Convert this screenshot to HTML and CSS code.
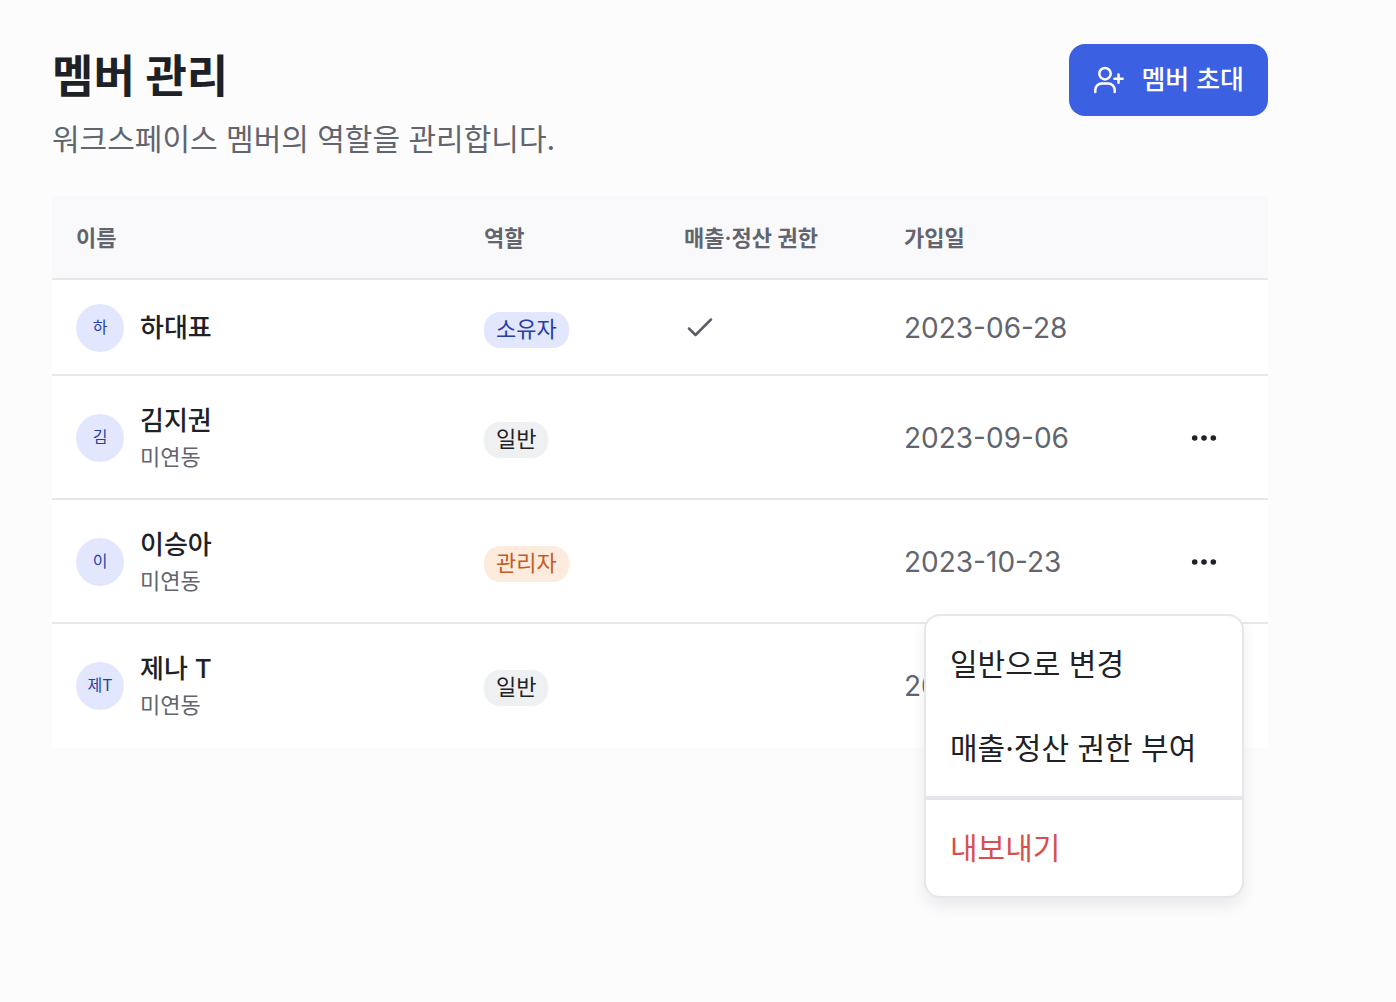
FILE: index.html
```html
<!DOCTYPE html>
<html lang="ko">
<head>
    <meta charset="UTF-8">
    <meta name="viewport" content="width=device-width, initial-scale=1.0">
    <title>멤버 관리</title>
    <link rel="stylesheet" href="styles.css">
</head>
<body>
    <main class="page">
        <header class="page-header">
            <div>
                <h1>멤버 관리</h1>
                <p class="subtitle">워크스페이스 멤버의 역할을 관리합니다.</p>
            </div>
            <button type="button" class="invite">
                <svg class="icon" viewBox="0 0 32 32" aria-hidden="true">
                    <circle cx="12" cy="9.7" r="5.7"/>
                    <path d="M2.3 28v-2a6.4 6.4 0 0 1 6.4-6.4h6.6a6.4 6.4 0 0 1 6.4 6.4v2M25.5 10.6v8.2M21.4 14.7h8.2"/>
                </svg>
                멤버 초대
            </button>
        </header>

        <table class="members">
            <thead>
                <tr>
                    <th>이름</th>
                    <th class="col-role">역할</th>
                    <th class="col-perm">매출·정산 권한</th>
                    <th class="col-date">가입일</th>
                    <th class="col-action"></th>
                </tr>
            </thead>
            <tbody>
                <tr>
                    <td>
                        <div class="member">
                            <span class="avatar">하</span>
                            <div class="name">하대표</div>
                        </div>
                    </td>
                    <td><span class="badge owner">소유자</span></td>
                    <td>
                        <svg class="icon check" viewBox="0 0 32 32" role="img" aria-label="권한 있음">
                            <path d="M5 16.5l6.5 6.5L27 7.5"/>
                        </svg>
                    </td>
                    <td class="date">2023-06-28</td>
                    <td></td>
                </tr>
                <tr>
                    <td>
                        <div class="member">
                            <span class="avatar">김</span>
                            <div class="with-team">
                                <div class="name">김지권</div>
                                <div class="team">미연동</div>
                            </div>
                        </div>
                    </td>
                    <td><span class="badge">일반</span></td>
                    <td></td>
                    <td class="date">2023-09-06</td>
                    <td>
                        <button type="button" class="more" aria-label="더보기">
                            <svg class="dots" viewBox="0 0 32 32" aria-hidden="true">
                                <circle cx="6.7" cy="16" r="2.8"/><circle cx="16" cy="16" r="2.8"/><circle cx="25.3" cy="16" r="2.8"/>
                            </svg>
                        </button>
                    </td>
                </tr>
                <tr>
                    <td>
                        <div class="member">
                            <span class="avatar">이</span>
                            <div class="with-team">
                                <div class="name">이승아</div>
                                <div class="team">미연동</div>
                            </div>
                        </div>
                    </td>
                    <td><span class="badge admin">관리자</span></td>
                    <td></td>
                    <td class="date">2023-10-23</td>
                    <td>
                        <div class="dropdown">
                            <button type="button" class="more" aria-label="더보기" aria-expanded="true">
                                <svg class="dots" viewBox="0 0 32 32" aria-hidden="true">
                                    <circle cx="6.7" cy="16" r="2.8"/><circle cx="16" cy="16" r="2.8"/><circle cx="25.3" cy="16" r="2.8"/>
                                </svg>
                            </button>
                            <div class="menu">
                                <div class="menu-group">
                                    <button type="button">일반으로 변경</button>
                                    <button type="button">매출·정산 권한 부여</button>
                                </div>
                                <div class="menu-group">
                                    <button type="button" class="danger">내보내기</button>
                                </div>
                            </div>
                        </div>
                    </td>
                </tr>
                <tr>
                    <td>
                        <div class="member">
                            <span class="avatar">제T</span>
                            <div class="with-team">
                                <div class="name">제나 T</div>
                                <div class="team">미연동</div>
                            </div>
                        </div>
                    </td>
                    <td><span class="badge">일반</span></td>
                    <td></td>
                    <td class="date">2023-11-02</td>
                    <td></td>
                </tr>
            </tbody>
        </table>
    </main>
</body>
</html>
```
FILE: styles.css
```css
*{box-sizing: border-box;}
body{
    margin: 0;
    background-color: #fcfcfc;
    color: #1e2125;
    font: 26px/40px Inter, "Noto Sans CJK KR", sans-serif;
}
h1, p{margin: 0;}
button{
    border: 0;
    background: none;
    color: inherit;
    font: inherit;
    cursor: pointer;
}

.page{
    min-height: 100vh;
    padding: 44px 128px 44px 52px;
}
.page-header{
    display: flex;
    justify-content: space-between;
    align-items: flex-start;
    margin-bottom: 34px;
}
h1{
    margin-bottom: 6px;
    font-size: 45px;
    line-height: 66px;
    font-weight: 700;
}
.subtitle{
    color: #62656e;
    font-size: 30px;
    line-height: 46px;
}
.invite{
    display: flex;
    align-items: center;
    gap: 16px;
    height: 72px;
    padding: 0 24px;
    border-radius: 16px;
    background-color: #3b60e2;
    color: #ffffff;
    font-weight: 500;
}
.icon{
    display: block;
    width: 32px;
    height: 32px;
    fill: none;
    stroke: currentColor;
    stroke-width: 2.5;
    stroke-linecap: round;
    stroke-linejoin: round;
}

/* table */
.members{
    width: 100%;
    table-layout: fixed;
    border-collapse: separate;
    border-spacing: 0;
    background-color: #ffffff;
}
.members th{
    height: 84px;
    padding: 2px 24px 0;
    border-bottom: 2px solid #e6e7eb;
    background-color: #f9f9fb;
    color: #62656e;
    font-size: 22px;
    font-weight: 600;
    text-align: left;
    white-space: nowrap;
}
.members td{
    padding: 24px 24px 22px;
    border-bottom: 2px solid #e6e7eb;
    vertical-align: middle;
}
.members tbody tr:last-child td{
    padding-bottom: 24px;
    border-bottom: 0;
}
.members .col-role{width: 200px;}
.members .col-perm{width: 220px;}
.members .col-date{width: 260px;}
.members .col-action{width: 128px;}

.member{
    display: flex;
    align-items: center;
    gap: 16px;
}
.avatar{
    flex: none;
    width: 48px;
    height: 48px;
    border-radius: 50%;
    background-color: #e2e7fe;
    color: #263ea6;
    font-size: 16px;
    line-height: 46px;
    text-align: center;
}
.with-team{padding: 2px 0;}
.name{
    font-weight: 500;
    line-height: 38px;
}
.team{
    color: #62656e;
    font-size: 22px;
    line-height: 34px;
}
.badge{
    display: inline-block;
    height: 36px;
    padding: 0 12px;
    border-radius: 16px;
    background-color: #eff0f2;
    font-size: 22px;
    line-height: 34px;
    font-weight: 400;
    vertical-align: middle;
}
.badge.owner{
    background-color: #e2e7fe;
    color: #263ea6;
}
.badge.admin{
    background-color: #fdecdd;
    color: #c65a25;
}
.check{color: #5b5e66;}
.members .date{
    color: #62656e;
    font-size: 28px;
}

/* row menu */
.more{
    display: block;
    width: 80px;
    height: 48px;
    padding: 0;
}
.dots{
    display: block;
    width: 32px;
    height: 32px;
    margin: 0 auto;
    fill: #1e2125;
}
.dropdown{position: relative;}
.menu{
    position: absolute;
    top: 76px;
    right: 0;
    z-index: 10;
    width: 320px;
    border: 2px solid #e6e7eb;
    border-radius: 16px;
    background-color: #ffffff;
    box-shadow: 0 8px 16px rgba(30, 30, 60, .08);
}
.menu-group{padding: 6px 0;}
.menu-group + .menu-group{border-top: 4px solid #e6e7eb;}
.menu button{
    display: block;
    width: 100%;
    height: 84px;
    padding: 0 24px;
    font-size: 30px;
    text-align: left;
}
.menu .danger{color: #d6504f;}
```
